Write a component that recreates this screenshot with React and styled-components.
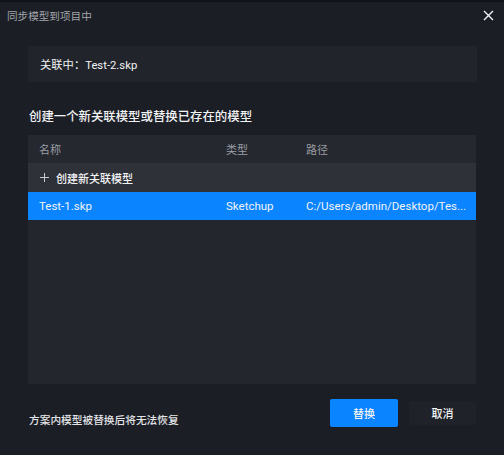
import React from 'react'
import styled, { createGlobalStyle } from 'styled-components'

const GlobalStyle = createGlobalStyle`
  html, body {
    margin: 0;
    padding: 0;
    background: #1b1e25;
  }
  body {
    font-family: Roboto, "Noto Sans CJK SC", sans-serif;
  }
`

const Dialog = styled.div`
  width: 504px;
  height: 455px;
  box-sizing: border-box;
  background: #1b1e25;
  border-top: 2px solid #111318;
  display: flex;
  flex-direction: column;
`

const TitleBar = styled.div`
  height: 26px;
  display: flex;
  align-items: center;
  justify-content: space-between;
  padding: 0 9px 0 7px;
`

const Title = styled.div`
  font-size: 10.6px;
  color: #a2a5ab;
`

const CloseButton = styled.button`
  background: none;
  border: none;
  padding: 0;
  width: 14px;
  height: 14px;
  display: flex;
  align-items: center;
  justify-content: center;
  cursor: pointer;
`

const InfoBox = styled.div`
  margin: 18px 27px 0 28px;
  height: 36px;
  background: #21242b;
  display: flex;
  align-items: center;
  padding-left: 12px;
  font-size: 11.3px;
  color: #f2f3f5;
`

const Heading = styled.div`
  margin: 26px 0 0 29px;
  font-size: 12.4px;
  font-weight: 500;
  color: #f2f3f5;
  line-height: 18px;
`

const Table = styled.div`
  margin: 9px 28px 0 28px;
  height: 249px;
  background: #23262d;
  display: flex;
  flex-direction: column;
`

const Row = styled.div`
  display: grid;
  grid-template-columns: 187px 80px 1fr;
  align-items: center;
  padding-left: 11px;
  height: ${p => p.$h || 28}px;
  background: ${p => p.$bg || 'transparent'};
  font-size: ${p => p.$small ? 11 : 11.5}px;
  color: ${p => p.$muted ? '#9a9da3' : '#f2f3f5'};
`

const Cell = styled.div`
  white-space: nowrap;
  overflow: hidden;
`

const CreateCell = styled.div`
  display: flex;
  align-items: center;
  gap: 7px;
  grid-column: 1 / span 3;
  font-size: 11px;
  font-weight: 500;
  padding-left: 1px;
`

const Footer = styled.div`
  margin: 14px 28px 0 29px;
  display: flex;
  align-items: center;
`

const Note = styled.div`
  font-size: 10.7px;
  font-weight: 500;
  color: #e4e5e8;
  margin-top: 14px;
  flex: 1;
`

const Button = styled.button`
  width: ${p => p.$primary ? 68 : 67}px;
  height: ${p => p.$primary ? 28 : 24}px;
  margin-left: ${p => p.$primary ? 0 : 11}px;
  border: none;
  border-radius: 2px;
  background: ${p => p.$primary ? '#0a84ff' : '#1f2229'};
  color: #f2f3f5;
  font-family: "Noto Sans CJK SC", sans-serif;
  font-size: 11px;
  font-weight: 500;
  cursor: pointer;
`

export default function App() {
  return (
    <>
      <GlobalStyle />
      <Dialog>
        <TitleBar>
          <Title>同步模型到项目中</Title>
          <CloseButton>
            <svg width="11" height="11" viewBox="0 0 11 11">
              <path d="M1 1L10 10M10 1L1 10" stroke="#f2f3f5" strokeWidth="1.4" />
            </svg>
          </CloseButton>
        </TitleBar>
        <InfoBox>关联中：Test-2.skp</InfoBox>
        <Heading>创建一个新关联模型或替换已存在的模型</Heading>
        <Table>
          <Row $h={28} $bg="#25282f" $small $muted>
            <Cell>名称</Cell>
            <Cell>类型</Cell>
            <Cell>路径</Cell>
          </Row>
          <Row $h={29} $bg="#2e3138">
            <CreateCell>
              <svg width="9" height="9" viewBox="0 0 9 9">
                <path d="M4.5 0V9M0 4.5H9" stroke="#c9cbcf" strokeWidth="1" />
              </svg>
              创建新关联模型
            </CreateCell>
          </Row>
          <Row $bg="#0a84ff">
            <Cell>Test-1.skp</Cell>
            <Cell>Sketchup</Cell>
            <Cell>C:/Users/admin/Desktop/Tes...</Cell>
          </Row>
        </Table>
        <Footer>
          <Note>方案内模型被替换后将无法恢复</Note>
          <Button $primary>替换</Button>
          <Button>取消</Button>
        </Footer>
      </Dialog>
    </>
  )
}
